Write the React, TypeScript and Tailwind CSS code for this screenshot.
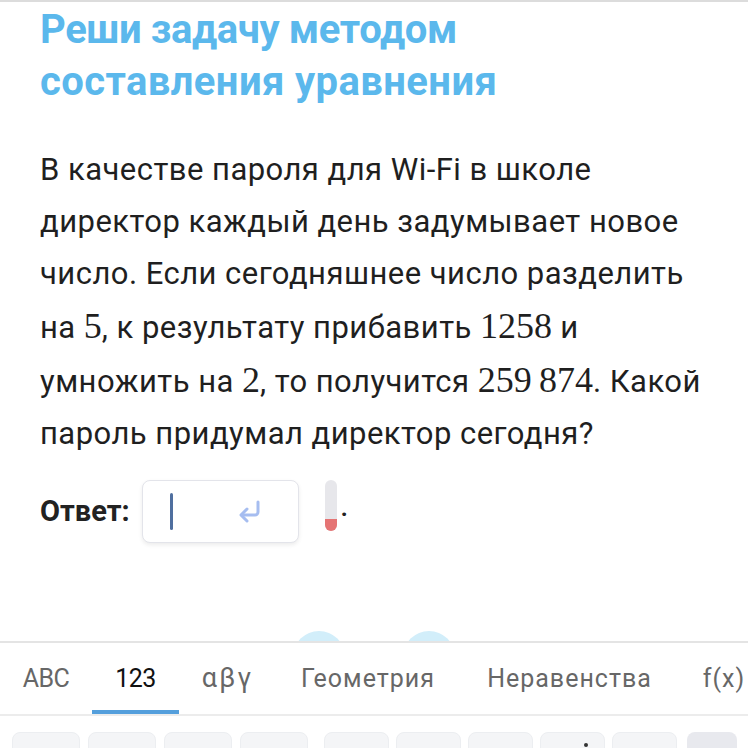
import React from 'react';

const body = "font-['Roboto',sans-serif]";
const math = "font-['Liberation_Serif',serif] text-[36px] tracking-normal";

function EnterIcon() {
  return (
    <svg width="24" height="26" viewBox="0 0 24 26" fill="none" stroke="#a6bdf0" strokeWidth="3" strokeLinecap="round" strokeLinejoin="round">
      <path d="M20 3v10a3 3 0 0 1-3 3H4" />
      <path d="M9 10l-6 6 6 6" />
    </svg>
  );
}

const tabs = [
  { label: 'ABC', w: 'w-[92px]', t: 'tracking-[-0.02em]' },
  { label: '123', w: 'w-[87px]', t: 'tracking-[-0.02em]' },
  { label: 'αβγ', w: 'w-[97px]', t: 'tracking-[0.08em] text-[27px]' },
  { label: 'Геометрия', w: 'w-[184px]', t: 'tracking-[0.04em]' },
  { label: 'Неравенства', w: 'w-[219px]', t: 'tracking-[0.04em]' },
  { label: 'f(x)', w: 'w-[90px]', t: 'tracking-[0.04em]' },
];

export default function App() {
  return (
    <div className={`w-[748px] h-[748px] overflow-hidden bg-white flex flex-col border-t-2 border-[#dcdcdc] ${body}`}>
      <main className="px-10">
        <h1 className="pt-[2px] text-[40px] leading-[52px] font-bold text-[#5bb8ec] tracking-[-0.01em]">
          Реши задачу методом
          <br />
          <span className="tracking-[0.01em]">составления уравнения</span>
        </h1>

        <p className="mt-9 text-[31px] leading-[52px] text-[#1f1f1f] tracking-[0.015em]">
          В качестве пароля для Wi-Fi в школе
          <br />
          директор каждый день задумывает новое
          <br />
          число. Если сегодняшнее число разделить
          <br />
          на <span className={math}>5</span>, к результату прибавить <span className={math}>1258</span> и
          <br />
          умножить на <span className={math}>2</span>, то получится <span className={math}>259&thinsp;874</span>. Какой
          <br />
          пароль придумал директор сегодня?
        </p>

        <div className="mt-5 flex items-center">
          <span className="text-[29px] font-bold text-[#222]">Ответ:</span>
          <div className="ml-3 w-[157px] h-[63px] rounded-lg border border-[#e3e4ea] bg-white shadow-[0_2px_4px_rgba(0,0,0,0.08)] flex items-center pl-[27px] pr-9 justify-between">
            <div className="w-[3px] h-[37px] rounded-sm bg-[#4f6f9f]" />
            <EnterIcon />
          </div>
          <div className="ml-[26px] mt-[-12px] w-3 h-[51px] rounded-full bg-[#e7e7eb] flex flex-col justify-end overflow-hidden">
            <div className="h-3 bg-[#e57474]" />
          </div>
          <span className="ml-[4px] mt-[-8px] text-[24px] font-bold text-[#222]">.</span>
        </div>
      </main>

      <div className="relative mt-auto">
        <div className="absolute left-[293px] top-[-10px] w-[52px] h-[52px] rounded-full bg-[#d2eefa]" />
        <div className="absolute left-[403px] top-[-10px] w-[52px] h-[52px] rounded-full bg-[#d2eefa]" />
        <div className="relative z-10 bg-white border-t-2 border-[#e4e4e4] h-[107px]">
          <div className="flex border-b-2 border-[#ececec] h-[73px]">
            {tabs.map((t) => (
              <div
                key={t.label}
                className={`${t.w} shrink-0 pt-1 flex items-center justify-center border-b-4 text-[25px] whitespace-nowrap ${t.t} ${
                  t.label === '123' ? 'border-[#549fdc] text-[#111]' : 'border-transparent text-[#676767]'
                }`}
              >
                {t.label}
              </div>
            ))}
          </div>
          <div className="mt-4 pl-3 flex">
            <div className="flex gap-2">
              {[0, 1, 2, 3].map((i) => (
                <div key={i} className="w-[68px] h-14 rounded-lg bg-[#f4f5f7] border border-[#eceef1]" />
              ))}
            </div>
            <div className="ml-4 flex gap-[7px]">
              {[0, 1, 2, 3, 4].map((i) => (
                <div key={i} className="w-[65px] h-14 rounded-lg bg-[#f4f5f7] border border-[#eceef1] flex justify-center">
                  {i === 3 && <div className="mt-[10px] ml-[26px] w-[4px] h-[4px] rounded-full bg-[#333]" />}
                </div>
              ))}
            </div>
            <div className="ml-[10px] w-[50px] h-14 rounded-lg bg-[#e8e9ee]" />
          </div>
        </div>
      </div>
    </div>
  );
}
